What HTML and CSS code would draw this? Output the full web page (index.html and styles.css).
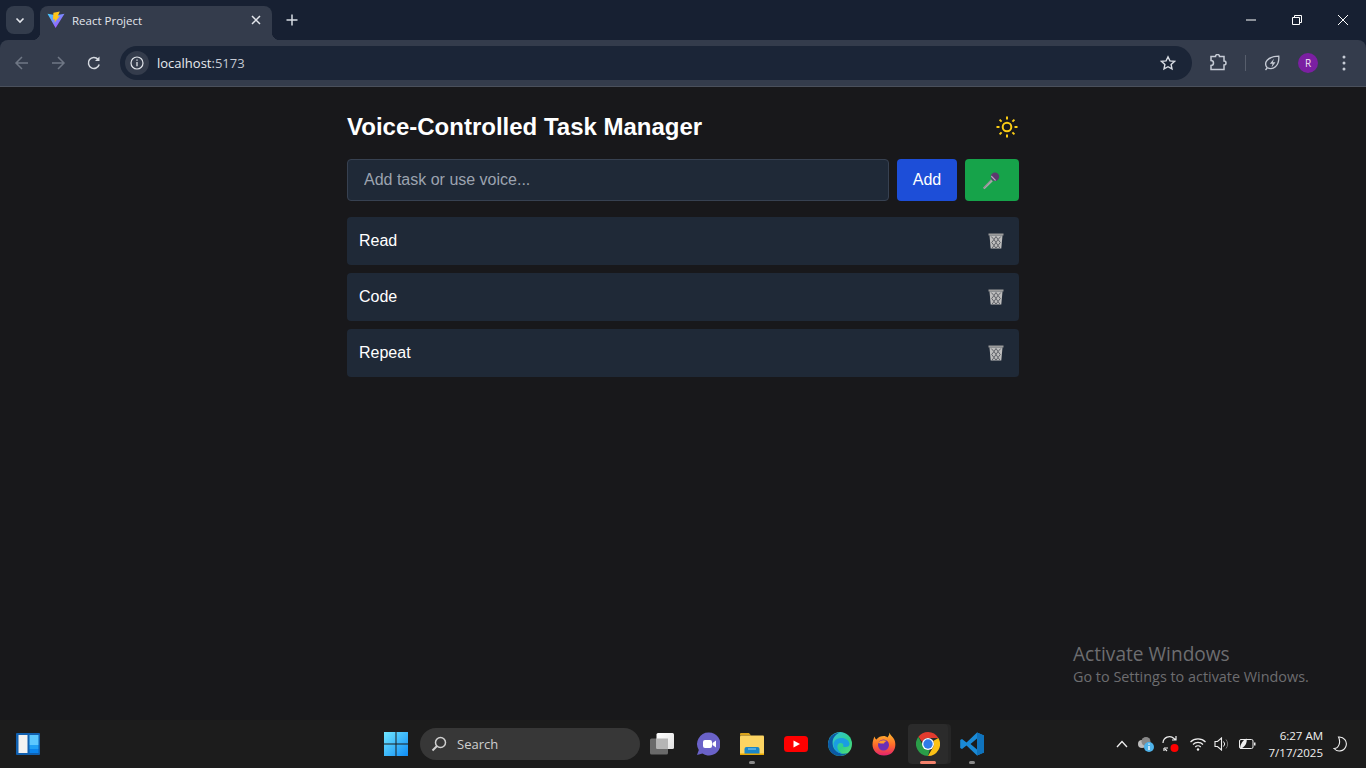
FILE: index.html
```html
<!DOCTYPE html>
<html lang="en">
<head>
    <meta charset="UTF-8">
    <meta name="viewport" content="width=device-width, initial-scale=1.0">
    <title>React Project</title>
    <link rel="stylesheet" href="styles.css">
</head>
<body>

<div class="screen">
    <!-- browser window top -->
    <header class="browser">
        <div class="tabstrip">
            <button class="tab-menu">
                <svg width="12" height="12" viewBox="0 0 12 12"><path d="M2.5 4.5 6 8l3.5-3.5" fill="none" stroke="#e3e6ec" stroke-width="1.6"/></svg>
            </button>
            <div class="tab">
                <svg class="tab-logo" width="18" height="18" viewBox="0 0 18 18">
                    <defs>
                        <linearGradient id="viteA" x1="0" y1="0" x2="1" y2="1"><stop offset="0" stop-color="#41d1ff"/><stop offset="1" stop-color="#bd34fe"/></linearGradient>
                    </defs>
                    <path d="M.5 2.8 8.6 17l8.9-14.2L9 4.3z" fill="url(#viteA)"/>
                    <path d="M12.8.4 6.4 1.7l-.4 7 2-.4-.5 3.2 5.2-6.600-2 .4z" fill="#ffc517"/>
                </svg>
                <span class="tab-title">React Project</span>
                <svg width="10" height="10" viewBox="0 0 10 10"><path d="m1 1 8 8M9 1 1 9" stroke="#e3e6ec" stroke-width="1.5"/></svg>
            </div>
            <button class="new-tab">
                <svg width="12" height="12" viewBox="0 0 12 12"><path d="M6 .5v11M.5 6h11" stroke="#d8dce3" stroke-width="1.5"/></svg>
            </button>
            <div class="window-controls">
                <span class="win-btn"><svg width="10" height="10" viewBox="0 0 10 10"><path d="M0 5h10" stroke="#fff"/></svg></span>
                <span class="win-btn"><svg width="10" height="10" viewBox="0 0 10 10"><path d="M.5 2.5h7v7h-7zM2.5 2.5V.5h7v7h-2" fill="none" stroke="#fff"/></svg></span>
                <span class="win-btn"><svg width="10" height="10" viewBox="0 0 10 10"><path d="m0 0 10 10M10 0 0 10" stroke="#fff"/></svg></span>
            </div>
        </div>
        <div class="toolbar">
            <span class="nav-btn">
                <svg width="16" height="16" viewBox="0 0 16 16"><path d="M14 8H2.500M8 2 2 8l6 6" fill="none" stroke="#6f7785" stroke-width="1.500"/></svg>
            </span>
            <span class="nav-btn">
                <svg width="16" height="16" viewBox="0 0 16 16"><path d="M2 8h11.500M8 2l6 6-6 6" fill="none" stroke="#6f7785" stroke-width="1.500"/></svg>
            </span>
            <span class="nav-btn">
                <svg width="16" height="16" viewBox="0 0 16 16"><path d="M13.200 9.500A5.500 5.500 0 1 1 12 4.200" fill="none" stroke="#d5d9e0" stroke-width="1.500"/><path d="M13.500 1.500V6H9z" fill="#d5d9e0"/></svg>
            </span>
            <div class="omnibox">
                <span class="site-info">
                    <svg width="14" height="14" viewBox="0 0 14 14"><circle cx="7" cy="7" r="6" fill="none" stroke="#dfe3e9" stroke-width="1.200"/><path d="M7 6v4.200M7 3.500v1.300" stroke="#dfe3e9" stroke-width="1.300"/></svg>
                </span>
                <span class="url">localhost<span class="url-port">:5173</span></span>
                <svg class="star" width="16" height="16" viewBox="0 0 16 16"><path d="m8 1.800 1.900 4.100 4.500.5-3.300 3 .9 4.500L8 11.700l-4 2.200.9-4.500-3.300-3 4.500-.5z" fill="none" stroke="#d8dce3" stroke-width="1.400"/></svg>
            </div>
            <span class="tool-btn ext">
                <svg width="18" height="18" viewBox="0 0 18 18"><path d="M2 2.500h4.500a2 2 0 0 1 4 0H15v4.500a2 2 0 0 1 0 4V15.500H2V11.500a2.500 2.500 0 0 0 0-5z" fill="none" stroke="#c6cbd5" stroke-width="1.500"/></svg>
            </span>
            <span class="divider"></span>
            <span class="tool-btn leaf">
                <svg width="16" height="16" viewBox="0 0 16 16"><path d="M1.500 15 3.500 12.500M3 12.500C-.5 8 3 1.500 14.800 1.200 15.500 11 9 16 3 12.500z" fill="none" stroke="#c6cbd5" stroke-width="1.300"/><path d="M10 3.800 5.800 8.800h2.700l-1 3.700 4-5.200H8.800z" fill="#c6cbd5"/></svg>
            </span>
            <span class="avatar">R</span>
            <span class="tool-btn dots">
                <svg width="4" height="16" viewBox="0 0 4 16"><circle cx="2" cy="2" r="1.500" fill="#c6cbd5"/><circle cx="2" cy="8" r="1.500" fill="#c6cbd5"/><circle cx="2" cy="14" r="1.500" fill="#c6cbd5"/></svg>
            </span>
        </div>
    </header>

    <!-- the app -->
    <main class="page">
        <div class="container">
            <div class="title-row">
                <h1>Voice-Controlled Task Manager</h1>
                <button class="theme-btn">
                    <svg width="24" height="24" viewBox="0 0 24 24" fill="none" stroke="#facc15" stroke-width="2">
                        <circle cx="12" cy="12" r="4.300"/>
                        <path d="M12 1.500v3M12 19.500v3M1.500 12h3M19.500 12h3M4.600 4.600l2 2M17.400 17.400l2 2M4.600 19.400l2-2M17.400 6.600l2-2"/>
                    </svg>
                </button>
            </div>
            <div class="input-row">
                <input class="task-input" type="text" placeholder="Add task or use voice...">
                <button class="btn btn-add">Add</button>
                <button class="btn btn-mic">
                    <svg width="20" height="20" viewBox="0 0 20 20">
                        <path d="m1 17.800 8-8.300 1.800 1.800-8.300 8z" fill="#a8a8ab"/>
                        <path d="m1 17.800 8-8.300.6.600-7.800 8.400z" fill="#8a8a8d"/>
                        <circle cx="13" cy="6.800" r="4.200" fill="#5c3a6e"/>
                        <path d="m9 6.800 4 4 1.200-.5-4.700-4.700z" fill="#b9a9c2"/>
                    </svg>
                </button>
            </div>
            <ul class="task-list">
                <li class="task">
                    <span>Read</span>
                    <svg class="trash" width="16" height="16" viewBox="0 0 16 16"><use href="#trashIcon"/></svg>
                </li>
                <li class="task">
                    <span>Code</span>
                    <svg class="trash" width="16" height="16" viewBox="0 0 16 16"><use href="#trashIcon"/></svg>
                </li>
                <li class="task">
                    <span>Repeat</span>
                    <svg class="trash" width="16" height="16" viewBox="0 0 16 16"><use href="#trashIcon"/></svg>
                </li>
            </ul>
        </div>
        <div class="watermark">
            <div class="watermark-title">Activate Windows</div>
            <div class="watermark-sub">Go to Settings to activate Windows.</div>
        </div>
    </main>

    <!-- windows taskbar -->
    <footer class="taskbar">
        <div class="task-left">
            <svg width="24" height="22" viewBox="0 0 24 22">
                <rect width="24" height="22" rx="1" fill="#1060b0"/>
                <rect x="2.500" y="2" width="9" height="18" fill="#f2f2f2"/>
                <rect x="13.500" y="2" width="9" height="10" fill="#5cc8ff"/>
                <rect x="13.500" y="12" width="9" height="4" fill="#1fa0f5"/>
                <rect x="13.500" y="16" width="9" height="4" fill="#0a84ee"/>
            </svg>
        </div>
        <div class="task-center">
            <span class="task-icon start">
                <svg width="24" height="24" viewBox="0 0 24 24">
                    <defs>
                        <linearGradient id="winA" x1="0" y1="0" x2="1" y2="1"><stop offset="0" stop-color="#6fe6ff"/><stop offset="1" stop-color="#0f8cf5"/></linearGradient>
                    </defs>
                    <path d="M0 0h11.500v11.500H0zM12.500 0H24v11.500H12.500zM0 12.500h11.500V24H0zM12.500 12.500H24V24H12.500z" fill="url(#winA)"/>
                </svg>
            </span>
            <div class="search-box">
                <svg width="16" height="16" viewBox="0 0 16 16"><circle cx="9.500" cy="6.500" r="5" fill="none" stroke="#d0d0d0" stroke-width="1.500"/><path d="m6 10-4.500 4.500" stroke="#d0d0d0" stroke-width="2"/></svg>
                <span>Search</span>
            </div>
            <span class="task-icon first">
                <svg width="24" height="24" viewBox="0 0 24 24">
                    <defs>
                        <linearGradient id="viewA" x1="0" y1="0" x2="1" y2="1"><stop offset="0" stop-color="#fff"/><stop offset="1" stop-color="#e0e0e0"/></linearGradient>
                    </defs>
                    <rect y="6.500" width="18" height="16" rx="1.500" fill="#6a6a6a"/>
                    <rect x="6.500" y="1" width="17.500" height="16" rx="1.500" fill="url(#viewA)"/>
                    <rect x="6.500" y="6.500" width="11.500" height="10.500" fill="#b5b5b5"/>
                </svg>
            </span>
            <span class="task-icon">
                <svg width="24" height="24" viewBox="0 0 24 24">
                    <path d="M13 .5a11.500 11.500 0 1 1-6.500 21L1 23l1.800-5A11.500 11.500 0 0 1 13 .5z" fill="#6a62c8"/>
                    <rect x="7" y="8" width="9" height="8" rx="2" fill="#fff"/>
                    <path d="m16.500 11 3.500-2.500v7L16.500 13z" fill="#fff"/>
                </svg>
            </span>
            <span class="task-icon running">
                <svg width="24" height="24" viewBox="0 0 24 24">
                    <path d="M0 2a1 1 0 0 1 1-1h8l2 2.500H0z" fill="#d9a21b"/>
                    <rect y="3.500" width="24" height="19.500" rx="1" fill="#fcd462"/>
                    <path d="M4.500 22v-5a2 2 0 0 1 2-2h11a2 2 0 0 1 2 2v5z" fill="#1a86c8"/>
                    <path d="M8 17h8" stroke="#8fd0f2" stroke-width="1"/>
                    <rect y="21.500" width="24" height="1.500" fill="#e8a800"/>
                </svg>
            </span>
            <span class="task-icon">
                <svg width="24" height="16" viewBox="0 0 24 16"><rect width="24" height="16" rx="3.500" fill="#f00"/><path d="m9.500 4.500 6.500 3.500-6.500 3.500z" fill="#fff"/></svg>
            </span>
            <span class="task-icon">
                <svg width="24" height="24" viewBox="0 0 24 24">
                    <defs>
                        <linearGradient id="edgeA" x1="0" y1="0" x2="1" y2="1"><stop offset="0" stop-color="#35c1f1"/><stop offset=".6" stop-color="#2fd08a"/><stop offset="1" stop-color="#5fe07a"/></linearGradient>
                    </defs>
                    <circle cx="12" cy="12" r="12" fill="url(#edgeA)"/>
                    <path d="M0 12C.5 4 7 .5 12 .5 6 3 3.500 8 5 14c1.500 6 9 9.500 15 7a12 12 0 0 1-8 3C5 24 0 18.500 0 12z" fill="#0c59a4"/>
                    <path d="M5.500 12c.5-4 4-6 8-6 4.500 0 7.500 2.500 8 5.500.3 2.500-1.500 3.500-4.500 3.500-1.500 0-2-.5-1.700-1.500.5-2-1.800-3-4-2.200-2.500 1-2.500 5-.5 7.500.8 1 1.800 2 3.500 2.700-5-.2-9-4.500-8.800-9.500z" fill="#1b9de2"/>
                </svg>
            </span>
            <span class="task-icon">
                <svg width="24" height="24" viewBox="0 0 24 24">
                    <defs>
                        <linearGradient id="foxA" x1="0" y1="0" x2="0" y2="1"><stop offset="0" stop-color="#ffbd2e"/><stop offset=".55" stop-color="#ff6a2a"/><stop offset="1" stop-color="#e3226f"/></linearGradient>
                    </defs>
                    <path d="M17.500.5c.5 2.500 3 4 4.500 6.500 3 5 1.500 16.500-10 16.500C5 23.500.5 18.500.5 12.500.5 9.500 1.500 6.500 2.500 4.500 3 6 3.500 7 4.500 7.500 6 5 9 4 12 4c1 0 2.500.5 3.500 1.500C16.500 4 17.500 2.500 17.500.5z" fill="url(#foxA)"/>
                    <circle cx="11.500" cy="13" r="5.500" fill="#6b2fb5"/>
                    <path d="M6 11c2-3 6-3.500 8.500-2-1 1-2 1-2.500 2.500-2 0-4 0-6-.5z" fill="#ff9a2e"/>
                </svg>
            </span>
            <span class="task-icon active">
                <svg width="24" height="24" viewBox="0 0 24 24">
                    <path d="M12 0a12 12 0 0 1 10.400 6H12a6 6 0 0 0-5.700 4.100L2.400 4.800A12 12 0 0 1 12 0z" fill="#e33b2e"/>
                    <path d="M22.400 6A12 12 0 0 1 12 24l5.200-9A6 6 0 0 0 17.200 9z" fill="#fbc116"/>
                    <path d="M12 24A12 12 0 0 1 2.400 4.800L7.600 15a6 6 0 0 0 6.100 2.700z" fill="#2a9d48"/>
                    <circle cx="12" cy="12" r="6" fill="#fff"/>
                    <circle cx="12" cy="12" r="4.700" fill="#2f7be8"/>
                </svg>
            </span>
            <span class="task-icon running">
                <svg width="24" height="24" viewBox="0 0 24 24">
                    <path d="M17 .5 24 3.500v17L17 23.500 6.500 13.500 2 17 .2 16V8L2 7l4.500 3.500zM17 6.500 10.500 12 17 17.500z" fill="#1a8ad6"/>
                    <path d="M17 .5 24 3.500v17L17 23.500V17.500L17 6.500z" fill="#0f73bd"/>
                </svg>
            </span>
        </div>
        <div class="task-right">
            <svg class="tray caret" width="12" height="8" viewBox="0 0 12 8"><path d="m1 7 5-5.500L11 7" fill="none" stroke="#eee" stroke-width="1.300"/></svg>
            <svg class="tray cloud" width="18" height="16" viewBox="0 0 18 16"><circle cx="5" cy="8" r="4" fill="#bbb"/><circle cx="9" cy="5.500" r="4.500" fill="#888"/><circle cx="12" cy="11" r="5" fill="#4fb3ea"/><path d="M12 10v4M12 7.500v1.200" stroke="#fff" stroke-width="1.300"/></svg>
            <svg class="tray" width="18" height="18" viewBox="0 0 18 18"><path d="M1 8a6.500 6.500 0 0 1 11-4.500L14 5M14 1v4h-4M3 14l2 2" fill="none" stroke="#eee" stroke-width="1.200"/><path d="M2 13h4M2 13v3" stroke="#eee" stroke-width="1.200"/><circle cx="12.500" cy="13" r="4" fill="#f00"/></svg>
            <svg class="tray wifi" width="16" height="14" viewBox="0 0 16 14"><path d="M.5 5a10.500 10.500 0 0 1 15 0M3 7.500a7 7 0 0 1 10 0M5.300 10a3.500 3.500 0 0 1 5.400 0" fill="none" stroke="#eee" stroke-width="1.200"/><circle cx="8" cy="12.500" r="1.200" fill="#eee"/></svg>
            <svg class="tray volume" width="16" height="14" viewBox="0 0 16 14"><path d="M1 4.500h2.500L7.500 1v12L3.500 9.500H1z" fill="none" stroke="#eee" stroke-width="1.100"/><path d="M9.500 4.500a3.500 3.500 0 0 1 0 5" fill="none" stroke="#eee"/><path d="M12 2.500a7 7 0 0 1 0 9" fill="none" stroke="#777"/></svg>
            <svg class="tray" width="17" height="12" viewBox="0 0 17 12"><rect x=".5" y="1.500" width="13.500" height="9" rx="1.500" fill="none" stroke="#eee"/><path d="M15 4.500h1.500v3H15z" fill="#eee"/><path d="M1 11c0-5 3-9 6.500-10.500C8.500 5 6 9 1 11z" fill="#eee"/></svg>
            <div class="clock">
                <div>6:27 AM</div>
                <div>7/17/2025</div>
            </div>
            <svg class="moon" width="14" height="16" viewBox="0 0 14 16"><path d="M5.500 1a7 7 0 1 1-4.500 11.500C6 12.500 8 6 5.500 1z" fill="none" stroke="#eee" stroke-width="1.100"/></svg>
        </div>
    </footer>
</div>

<svg class="icon-defs" width="0" height="0">
    <symbol id="trashIcon" viewBox="0 0 16 16">
        <rect x=".5" y=".5" width="15" height="2" fill="#9b9b9b"/>
        <path d="M1.500 2.500h13L13.300 15.500H2.700z" fill="#bdbdbd"/>
        <path d="m3.200 3.500 2.800 3-2.300 3 2.300 3-1.800 2.500M8 3.500l-2 3 2 3-2 3 1.800 2.500M8 3.500l2 3-2 3 2 3-1.800 2.500M12.800 3.500l-2.800 3 2.300 3-2.300 3 1.800 2.500" fill="none" stroke="#62646a" stroke-width="1"/>
    </symbol>
</svg>

</body>
</html>
```

FILE: styles.css
```css
* {
    box-sizing: border-box;
}
html, body {
    height: 100%;
}
body {
    margin: 0;
    font-family: "Liberation Sans", Arial, sans-serif;
    background-color: #18181b;
    overflow: hidden;
}
button {
    font-family: inherit;
    border: none;
    padding: 0;
    background: none;
    display: flex;
    align-items: center;
    justify-content: center;
}
.screen {
    display: flex;
    flex-direction: column;
    height: 768px;
}
.icon-defs {
    display: block;
}

/* browser top */
.browser {
    flex: none;
    height: 87px;
    background-color: #172032;
}
.tabstrip {
    height: 40px;
    display: flex;
    align-items: flex-end;
    padding-left: 6px;
}
.tab-menu {
    width: 28px;
    height: 28px;
    margin-bottom: 6px;
    border-radius: 8px;
    background-color: #333c4c;
}
.tab {
    position: relative;
    width: 232px;
    height: 34px;
    margin-left: 6px;
    padding: 0 11px 6px 7px;
    display: flex;
    align-items: center;
    background-color: #343c4c;
    border-radius: 8px 8px 0 0;
}
.tab::before,
.tab::after {
    content: "";
    position: absolute;
    bottom: 0;
    width: 8px;
    height: 8px;
}
.tab::before {
    left: -8px;
    background: radial-gradient(circle at 0 0, #172032 8px, #343c4c 8.500px);
}
.tab::after {
    right: -8px;
    background: radial-gradient(circle at 100% 0, #172032 8px, #343c4c 8.500px);
}
.tab-logo {
    flex: none;
}
.tab-title {
    flex: 1;
    margin-left: 7px;
    font-family: "Open Sans", sans-serif;
    font-size: 11.500px;
    color: #e3e6ec;
}
.new-tab {
    width: 28px;
    height: 28px;
    margin: 0 0 6px 6px;
}
.window-controls {
    margin-left: auto;
    height: 40px;
    display: flex;
}
.win-btn {
    width: 46px;
    height: 40px;
    display: flex;
    align-items: center;
    justify-content: center;
}
.toolbar {
    height: 47px;
    padding: 0 0 1px 4px;
    display: flex;
    align-items: center;
    background-color: #343c4c;
    border-radius: 8px 8px 0 0;
    border-bottom: 1px solid #4a505c;
}
.nav-btn {
    width: 36px;
    display: flex;
    justify-content: center;
}
.omnibox {
    width: 1072px;
    height: 34px;
    margin-left: 8px;
    padding: 0 16px 0 5px;
    display: flex;
    align-items: center;
    border-radius: 17px;
    background-color: #1b2537;
}
.site-info {
    width: 24px;
    height: 24px;
    border-radius: 50%;
    display: flex;
    align-items: center;
    justify-content: center;
    background-color: #343c4c;
}
.url {
    flex: 1;
    margin-left: 8px;
    font-family: "Open Sans", sans-serif;
    font-size: 13px;
    color: #e8ebf0;
}
.url-port {
    color: #c4c9d3;
}
.tool-btn {
    display: flex;
    align-items: center;
    justify-content: center;
}
.ext {
    margin-left: 17px;
}
.divider {
    width: 1px;
    height: 16px;
    margin-left: 18px;
    background-color: #575e6c;
}
.leaf {
    margin-left: 18px;
}
.avatar {
    width: 20px;
    height: 20px;
    margin-left: 18px;
    border-radius: 50%;
    display: flex;
    align-items: center;
    justify-content: center;
    font-family: "Open Sans", sans-serif;
    font-size: 10px;
    color: #f3e5f5;
    background-color: #7b1fa2;
}
.dots {
    margin-left: 24px;
}

/* app */
.page {
    flex: 1;
    position: relative;
    padding-top: 24px;
}
.container {
    width: 672px;
    margin-left: 347px;
}
.title-row {
    height: 32px;
    margin-bottom: 16px;
    display: flex;
    align-items: center;
    justify-content: space-between;
}
h1 {
    margin: 0;
    font-size: 24px;
    line-height: 32px;
    font-weight: bold;
    color: #fff;
}
.theme-btn {
    width: 24px;
    height: 24px;
}
.input-row {
    display: flex;
    gap: 8px;
    margin-bottom: 16px;
}
.task-input {
    flex: 1;
    min-width: 0;
    height: 42px;
    padding: 0 16px;
    font-family: inherit;
    font-size: 16px;
    color: #fff;
    background-color: #1f2937;
    border: 1px solid #374151;
    border-radius: 4px;
    outline: none;
}
.task-input::placeholder {
    color: #9ca3af;
}
.btn {
    height: 42px;
    font-size: 16px;
    color: #fff;
    border-radius: 4px;
}
.btn-add {
    width: 60px;
    background-color: #1d4ed8;
}
.btn-mic {
    width: 54px;
    background-color: #16a34a;
}
.task-list {
    list-style: none;
    margin: 0;
    padding: 0;
    display: flex;
    flex-direction: column;
    gap: 8px;
}
.task {
    height: 48px;
    padding: 0 15px 0 12px;
    display: flex;
    align-items: center;
    justify-content: space-between;
    font-size: 16px;
    color: #fff;
    background-color: #1f2937;
    border-radius: 4px;
}
.watermark {
    position: absolute;
    left: 1073px;
    top: 554px;
    font-family: "Open Sans", sans-serif;
    color: #6d6d70;
}
.watermark-title {
    font-size: 19.100px;
    line-height: 26px;
}
.watermark-sub {
    font-size: 14.400px;
    line-height: 20px;
}

/* taskbar */
.taskbar {
    flex: none;
    height: 48px;
    display: grid;
    grid-template-columns: 374px 620px 1fr;
    align-items: center;
    background-color: #1c1c1c;
}
.task-left {
    padding-left: 16px;
    display: flex;
    align-items: center;
}
.task-center {
    display: flex;
    align-items: center;
}
.task-icon {
    position: relative;
    width: 44px;
    height: 40px;
    display: flex;
    align-items: center;
    justify-content: center;
}
.task-icon.start {
    margin-right: 2px;
}
.task-icon.first {
    margin-right: 2px;
}
.task-icon.running::after,
.task-icon.active::after {
    content: "";
    position: absolute;
    left: 50%;
    bottom: 0;
    width: 6px;
    height: 3px;
    margin-left: -3px;
    border-radius: 2px;
    background-color: #8a8a8a;
}
.task-icon.active {
    width: 40px;
    margin: 0 2px;
    border-radius: 4px;
    background-color: #2b2b2b;
    box-shadow: 3px 0 0 #262626;
}
.task-icon.active::after {
    width: 16px;
    margin-left: -8px;
    background-color: #f4826c;
}
.search-box {
    width: 220px;
    height: 32px;
    padding-left: 11px;
    display: flex;
    align-items: center;
    gap: 10px;
    border-radius: 16px;
    background-color: #373737;
    font-family: "Open Sans", sans-serif;
    font-size: 13px;
    color: #cfcfcf;
}
.task-right {
    padding-left: 122px;
    display: flex;
    align-items: center;
}
.tray {
    flex: none;
    margin-right: 9px;
}
.cloud {
    margin-right: 7px;
}
.wifi {
    margin-left: 1px;
    margin-right: 8px;
}
.clock {
    width: 64px;
    margin-left: -6px;
    font-family: "Open Sans", sans-serif;
    font-size: 11.500px;
    line-height: 17px;
    text-align: right;
    color: #f0f0f0;
}
.moon {
    margin-left: 10px;
}
```
